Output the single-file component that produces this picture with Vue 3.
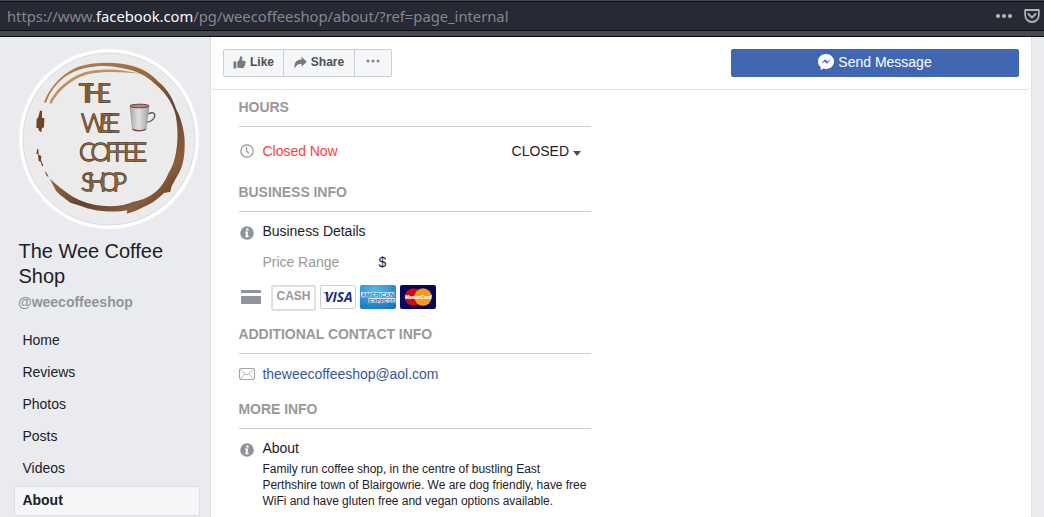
<script setup>
const links = ['Home', 'Reviews', 'Photos', 'Posts', 'Videos', 'About']
const words = [
  { text: 'THE', x: 69, y: 62, w: 32 },
  { text: 'WEE', x: 71, y: 91.5, w: 39 },
  { text: 'COFFEE', x: 69, y: 121, w: 68 },
  { text: 'SHOP', x: 71, y: 150.5, w: 46 },
]
</script>

<template>
  <div class="page">
    <header class="browser">
      <div class="urlbar">
        <span class="url">https://www.<b>facebook.com</b>/pg/weecoffeeshop/about/?ref=page_internal</span>
        <svg class="tools" width="49" height="28" viewBox="0 0 49 28">
          <g fill="#b1b1b3"><circle cx="2" cy="14" r="2.1" /><circle cx="8" cy="14" r="2.1" /><circle cx="14" cy="14" r="2.1" /></g>
          <path d="M29.200 8h13.600v5.200a6.800 6.800 0 0 1-13.600 0z" fill="none" stroke="#b1b1b3" stroke-width="1.8" stroke-linejoin="round" />
          <path d="M32.400 12l3.600 3.500 3.600-3.500" fill="none" stroke="#b1b1b3" stroke-width="1.9" stroke-linecap="round" stroke-linejoin="round" />
        </svg>
      </div>
    </header>
    <div class="body">
      <aside class="side">
        <svg class="avatar" width="180" height="180" viewBox="9 9 180 180">
          <defs>
            <linearGradient id="ring" x1="0" y1="0" x2="1" y2="1">
              <stop offset="0" stop-color="#b78653" /><stop offset=".4" stop-color="#9a6b42" /><stop offset=".6" stop-color="#63432f" /><stop offset=".8" stop-color="#8a5d3b" /><stop offset="1" stop-color="#4c2c18" />
            </linearGradient>
            <linearGradient id="mug"><stop offset="0" stop-color="#aaa9ad" /><stop offset=".45" stop-color="#e0e0e2" /><stop offset="1" stop-color="#a3a2a6" /></linearGradient>
          </defs>
          <circle cx="99" cy="99" r="90" fill="#fff" />
          <circle cx="99" cy="99" r="86" fill="#ebebeb" stroke="#d9dadc" />
          <g transform="scale(.33333)">
            <path d="M102 187C122 135 165 92 215 77C260 64 325 66 365 77C400 87 425 102 445 125C475 148 490 180 498 206C515 235 526 285 524 315C524 345 520 375 508 397C498 415 490 430 485 438L481 455L462 459C445 475 430 488 405 499C385 510 365 518 350 521L352 511C310 519 250 514 213 498L181 488L150 464L138 452L119 416C145 438 175 465 208 480C260 503 325 505 370 485C430 475 459 440 476 398C500 365 507 295 500 246C498 205 470 160 436 133C410 105 370 90 335 84C285 72 230 78 190 96C150 115 122 148 108 188Z" fill="url(#ring)" />
            <path d="M118 189C137 145 185 107 230 95C280 83 340 88 390 101C340 96 285 93 240 101C190 112 145 150 124 191Z" fill="#bd9162" />
            <path d="M90 212l6 0 0 22 7 0-1 28-6 2-2 13-7-5-2-7-6-2 1-25 5-7z" fill="#704325" />
            <path d="M82 326l3 2 1 16 8 4-1 12 7 17-4 2-4-14-6-2-2-20-5-2zM104 393l6 6 6 13-6-5z" fill="#704325" />
          </g>
          <g class="lettering">
            <text v-for="w in words" :key="w.text" class="outer" :x="w.x" :y="w.y" :textLength="w.w">{{ w.text }}</text>
            <text v-for="w in words" :key="w.text + '-in'" class="inner" :x="w.x" :y="w.y" :textLength="w.w">{{ w.text }}</text>
          </g>
          <path d="M138 74c6-3 8 0 6 4c-2 3-4 4-7 4" fill="none" stroke="#5d514e" stroke-width="1.300" />
          <path d="M120 66l2.500 23c1 2.500 12 2.500 13.500 0l3-23z" fill="url(#mug)" stroke="#858187" stroke-width=".5" />
          <ellipse cx="129.500" cy="66" rx="9.500" ry="1.800" fill="#b08a80" stroke="#74392f" stroke-width="1" />
          <path d="M122.500 89c2 2.200 11 2.200 13.500 0" fill="none" stroke="#8c4141" stroke-width="1.300" />
        </svg>
        <h1>The Wee Coffee Shop</h1>
        <div class="handle">@weecoffeeshop</div>
        <nav>
          <a v-for="l in links" :key="l" :class="{ active: l === 'About' }">{{ l }}</a>
        </nav>
      </aside>
      <main>
        <div class="actions">
          <div class="group">
            <button class="like">
              <svg width="13" height="13" viewBox="0 0 13 13" fill="#777a7d"><path d="M.5 5.500h2.800v7H.5zM4.300 6L6.500 3.500 7 1q.2-.8 1-.7 1.600.3 1.300 2.600L9 4.800h2.500q1.300.2 1 1.500.3.700-.3 1.400.3.900-.4 1.500.2.900-.5 1.400 0 1.400-1.400 1.400H6.500q-1.300 0-2.200-.7z" /></svg>Like
            </button>
            <button class="share">
              <svg width="13" height="13" viewBox="0 0 13 13" fill="#777a7d"><path d="M7.500.7L12.800 5.800 7.500 10.700V8Q2.800 7.400.7 12.500-.8 4 7.500 3.500z" /></svg>Share
            </button>
            <button class="more">
              <svg width="14" height="4" viewBox="0 0 14 4" fill="#7f858d"><circle cx="2" cy="2" r="1.500" /><circle cx="7" cy="2" r="1.500" /><circle cx="12" cy="2" r="1.500" /></svg>
            </button>
          </div>
          <button class="send">
            <svg width="16" height="16" viewBox="0 0 16 16"><path d="M8 0C3.400 0 0 3.300 0 7.500c0 2.400 1 4.300 2.700 5.600V16l2.600-1.500c.8.300 1.700.4 2.700.4 4.600 0 8-3.200 8-7.400S12.600 0 8 0z" fill="#fff" /><path d="M3 9.700L7 5.300l2.300 2.100L13 5.300 9 9.700 6.700 7.600z" fill="#4267b2" /></svg>
            Send Message
          </button>
        </div>
        <div class="info">
          <section class="hours">
            <h2>HOURS</h2>
            <div class="row">
              <svg width="16" height="16" viewBox="0 0 16 16" fill="none" stroke="#90949c" stroke-width="1.200"><circle cx="8" cy="8" r="6.200" /><path d="M7.500 3.800V8l2.300 2.300" /></svg>
              <span class="red">Closed Now</span><span class="closed">CLOSED<i></i></span>
            </div>
          </section>
          <section class="business">
            <h2>BUSINESS INFO</h2>
            <div class="row detail">
              <svg class="low" width="16" height="16" viewBox="0 0 16 16"><circle cx="8" cy="8" r="6.800" fill="#90949c" /><path d="M7.300 3.600h2.200v2H7.300zM6.200 6.600h3l-.7 4h1v1.600H6.300l.8-4h-.9z" fill="#fff" /></svg>
              <span>Business Details</span>
            </div>
            <div class="price"><span>Price Range</span><b>$</b></div>
            <div class="cards">
              <svg class="pay" width="20" height="14" viewBox="0 0 20 14" fill="#90949c"><path d="M1 0h18q1 0 1 1v2H0V1q0-1 1-1zM0 6h20v7q0 1-1 1H1q-1 0-1-1z" /></svg>
              <span class="cash">CASH</span>
              <svg width="36" height="24" viewBox="0 0 36 24"><rect x=".5" y=".5" width="35" height="23" rx="2" fill="#fff" stroke="#c8ccd8" /><text x="4.500" y="17" textLength="28" lengthAdjust="spacingAndGlyphs" class="visa">VISA</text><path d="M3 7.200h4.500l1.500 3.500Q6.500 8.200 3 7.200z" fill="#1d2e83" /></svg>
              <svg width="36" height="24" viewBox="0 0 36 24"><defs><radialGradient id="amex" cx=".4" cy=".2" r=".9"><stop offset="0" stop-color="#55b7e8" /><stop offset="1" stop-color="#1675bd" /></radialGradient></defs><rect width="36" height="24" rx="2" fill="url(#amex)" /><path d="M1 7.300h33.500v5H1zM8.500 13h27v5h-27z" fill="#d5ecf8" /><g class="amex"><text x="1.500" y="12" textLength="32.500" lengthAdjust="spacingAndGlyphs">AMERICAN</text><text x="9" y="17.700" textLength="26" lengthAdjust="spacingAndGlyphs">EXPRESS</text></g></svg>
              <svg width="36" height="24" viewBox="0 0 36 24"><rect width="36" height="24" rx="2" fill="#06065f" /><circle cx="13.500" cy="12" r="8.700" fill="#cf0a16" /><circle cx="23" cy="12" r="8.700" fill="#f79a18" /><text x="5" y="14" textLength="26.500" lengthAdjust="spacingAndGlyphs" class="mc">MasterCard</text></svg>
            </div>
          </section>
          <section class="contact">
            <h2>ADDITIONAL CONTACT INFO</h2>
            <div class="row">
              <svg class="mail" width="16" height="12" viewBox="0 0 16 12" fill="none" stroke="#a1a4aa"><rect x=".5" y=".5" width="15" height="11" rx="1" /><path d="M1 1l5.700 5.200q1.300 1 2.600 0L15 1M1 11l5-5.200M15 11l-5-5.200" stroke-width=".8" /></svg>
              <a class="email">theweecoffeeshop@aol.com</a>
            </div>
          </section>
          <section>
            <h2>MORE INFO</h2>
            <div class="row detail">
              <svg class="low" width="16" height="16" viewBox="0 0 16 16"><circle cx="8" cy="8" r="6.800" fill="#90949c" /><path d="M7.300 3.600h2.200v2H7.300zM6.200 6.600h3l-.7 4h1v1.600H6.300l.8-4h-.9z" fill="#fff" /></svg>
              <span>About</span>
            </div>
            <p>Family run coffee shop, in the centre of bustling East<br>Perthshire town of Blairgowrie. We are dog friendly, have free<br>WiFi and have gluten free and vegan options available.</p>
          </section>
        </div>
      </main>
    </div>
  </div>
</template>

<style>
body { background: #e9ebee; overflow: hidden; }
</style>

<style scoped>
* { box-sizing: border-box; }
.page { height: 517px; overflow: hidden; display: flex; flex-direction: column; font: 14px/20px "Liberation Sans", Arial, sans-serif; color: #1d2129; }
.browser { flex: none; height: 37px; background: #45494f; border-bottom: 1px solid #0b0c0e; padding-top: 1px; }
.urlbar { height: 30px; background: #272a35; border: solid #0b0c0e; border-width: 1px 0; display: flex; align-items: center; justify-content: space-between; padding: 0 1px 0 7px; }
.url { font: 14.75px/28px "Noto Sans", sans-serif; color: #85878c; white-space: nowrap; }
.url b { font-weight: 400; color: #f9f9fa; }
.tools { flex: none; margin-right: -2px; }
.body { flex: 1; min-height: 0; display: flex; }
.side { flex: none; width: 210px; padding: 12px 10px 0 14px; }
.avatar { display: block; margin-left: 5px; }
.lettering { font: 300 25px Lato, sans-serif; }
.outer { fill: none; stroke: #4b3727; stroke-width: 1.300px; }
.inner { fill: #94683e; }
h1 { font-size: 20px; line-height: 25px; font-weight: 400; margin: 10px 20px 0 4.500px; letter-spacing: -.03px; }
.handle { margin: 3px 0 0 4px; font-weight: 700; color: #90949c; }
nav { margin-top: 14px; display: flex; flex-direction: column; gap: 2px; }
nav a { height: 30px; line-height: 26px; border: 1px solid transparent; border-radius: 2px; padding-left: 7.500px; letter-spacing: -.03px; }
nav .active { background: #f5f6f7; border-color: #dddfe2; font-weight: 700; }
main { width: 822px; background: #fff; border: solid #dddfe2; border-width: 0 1px; }
.actions { height: 53px; border-bottom: 1px solid #dddfe2; border-radius: 0 0 4px 4px; padding: 12px 12px 0; display: flex; justify-content: space-between; align-items: flex-start; }
button { font: inherit; border: 0; padding: 0; display: flex; align-items: center; justify-content: center; }
.group { display: flex; width: 169px; height: 28px; border: 1px solid #ccd0d5; border-radius: 2px; background: #f5f6f7; }
.group button { background: none; color: #4b4f56; font-weight: 700; font-size: 12px; line-height: 24px; gap: 4px; padding-bottom: 2px; }
.group .like { width: 60px; border-right: 1px solid #ccd0d5; }
.group .share { width: 71px; border-right: 1px solid #ccd0d5; }
.group .more { flex: 1; padding-bottom: 4px; }
.send { width: 288px; height: 28px; border-radius: 2px; background: #4267b2; color: #fff; gap: 4px; padding-bottom: 2px; }
.info { width: 380px; padding: 7px 0 0 28px; letter-spacing: -.03px; }
section { height: 75px; }
.hours { height: 85px; }
.business { height: 142px; }
h2 { margin: 0 0 0 -.5px; padding-left: 0; height: 30px; font-size: 14px; line-height: 20px; font-weight: 700; color: #999; border-bottom: 1px solid #ccc; letter-spacing: -.05px; }
.row { height: 20px; margin-top: 10px; display: flex; align-items: center; gap: 7.500px; }
.hours .row { margin-top: 14px; }
.detail { margin-top: 9px; }
.low { margin-top: 3px; }
.red { color: #fa3e3e; }
.closed { margin: 0 10px 0 auto; display: flex; align-items: center; gap: 4px; }
.closed i { border: 4px solid transparent; border-top: 5px solid #4b4f56; border-bottom: 0; margin-top: 5px; }
.price { margin: 11px 0 0 23.500px; color: #999; display: flex; }
.price span { width: 116px; }
.price b { font-weight: 400; color: #1d2129; }
.cards { display: flex; gap: 4px; margin-top: 13px; height: 26px; align-items: flex-start; }
.pay { margin: 5px 6px 0 2px; }
.cash { width: 45px; height: 26px; border: 2px solid #dddfe2; border-radius: 2px; color: #999; font-weight: 700; font-size: 12px; line-height: 19px; text-align: center; }
.visa { font: italic 700 14px "Open Sans", sans-serif; fill: #1d2e83; }
.amex { font: 700 6px "Liberation Sans", sans-serif; fill: #1976bd; letter-spacing: 0; }
.mc { font: italic 700 6px "Liberation Sans", sans-serif; fill: #fff; stroke: #fff; stroke-width: .2px; letter-spacing: 0; }
.email { color: #365899; }
p { margin: 3px 0 0 23.500px; font-size: 12px; line-height: 16px; white-space: nowrap; }
</style>
